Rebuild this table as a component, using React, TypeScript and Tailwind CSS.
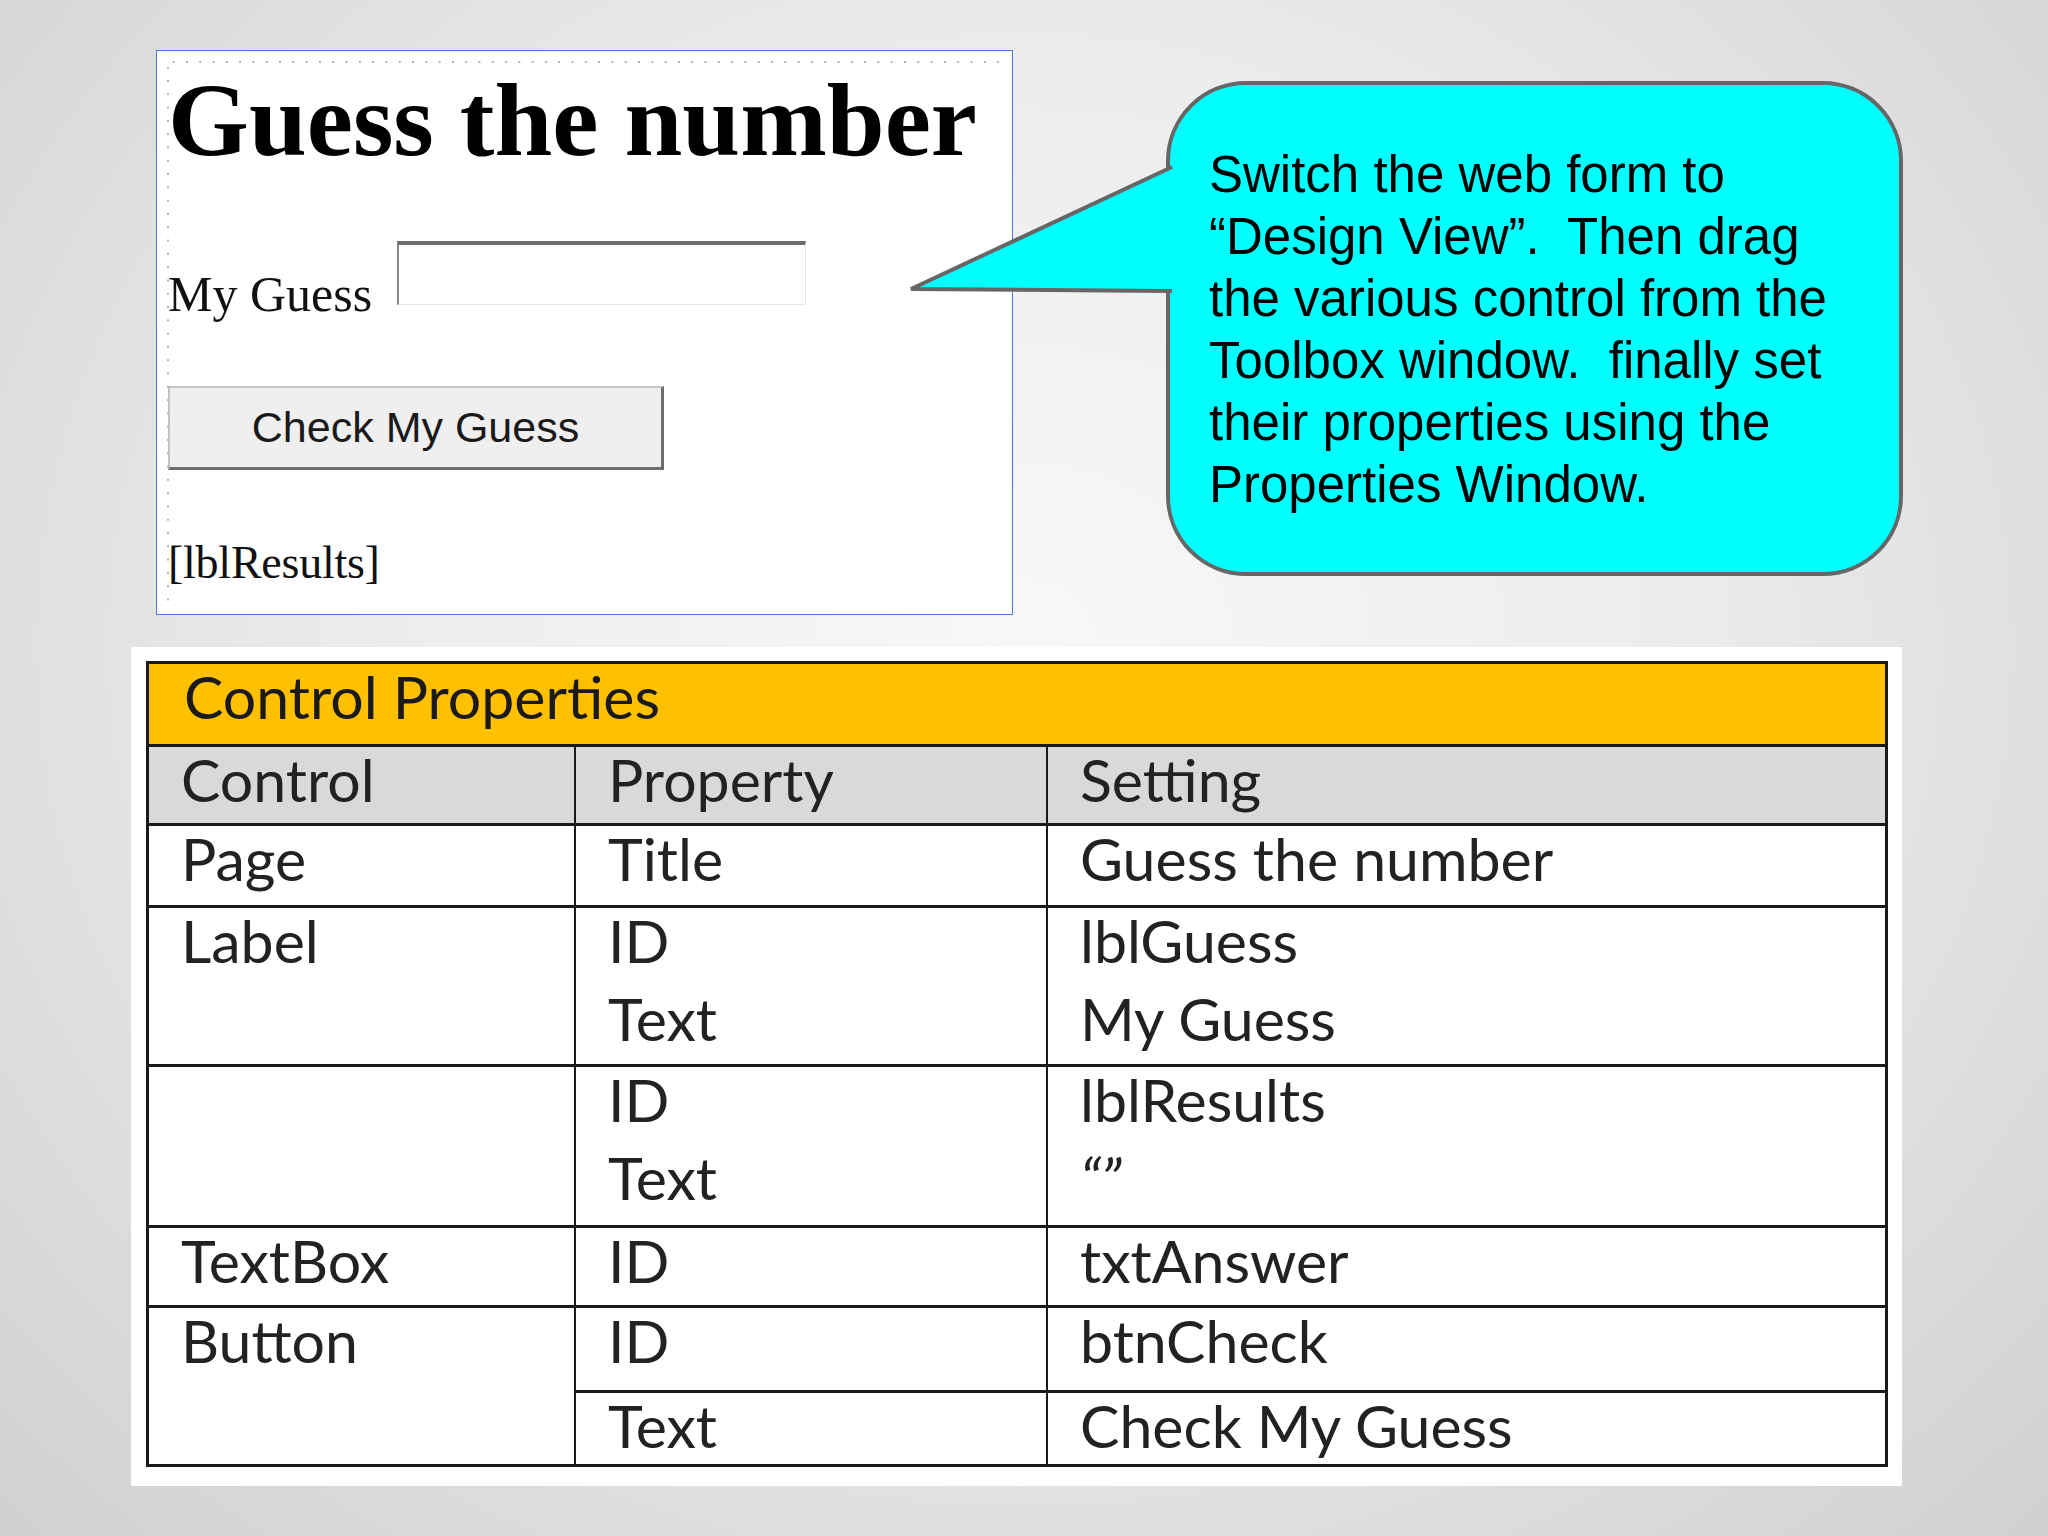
import React from 'react';

// one text line inside a table cell
function Line({ children, className = '' }: { children: React.ReactNode; className?: string }) {
  return <div className={`leading-[66px] whitespace-nowrap ${className}`}>{children}</div>;
}

function Cell({ w, children, last = false }: { w?: string; children?: React.ReactNode; last?: boolean }) {
  return (
    <div className={`${last ? 'flex-1' : `${w} border-r-2 border-[#1a1a1a]`} flex flex-col gap-[12px] pl-[32px]`}>
      {children}
    </div>
  );
}

function DesignForm() {
  return (
    <div className="relative w-[857px] h-[565px] border-[1.5px] border-[#4a7bd8] bg-white">
      {/* dotted guides of the designer surface */}
      <div className="absolute left-[10px] top-[10px] h-[2px] w-[838px] bg-[radial-gradient(circle,#b0b0b0_1px,transparent_1.4px)] bg-[length:13.3px_2px]" />
      <div className="absolute left-[10px] top-[10px] w-[2px] h-[550px] bg-[radial-gradient(circle,#b0b0b0_1px,transparent_1.4px)] bg-[length:2px_13.3px]" />

      <div className="pl-[11px] pt-[17px] font-['Liberation_Serif',serif] text-black">
        <h1 className="text-[104px] leading-none font-bold whitespace-nowrap">Guess the number</h1>

        <div className="mt-[69px] flex items-start">
          <div className="w-[229px] mt-[28px] text-[50px] leading-none text-[#111]">My Guess</div>
          <div className="w-[409px] h-[64px] border-t-[4px] border-l-2 border-r border-b border-t-[#6d6d6d] border-l-[#8a8a8a] border-r-[#e6e6e6] border-b-[#e6e6e6] bg-white" />
        </div>

        <div className="mt-[67px] w-[496px] h-[84px] flex items-center justify-center border-t-2 border-l-2 border-r-[3px] border-b-[3px] border-t-[#c4c4c4] border-l-[#c4c4c4] border-r-[#6e6e6e] border-b-[#6e6e6e] bg-[#efefef] font-['Liberation_Sans',sans-serif] text-[43px] text-[#1a1a1a]">
          Check My Guess
        </div>

        <div className="mt-[70px] text-[46px] leading-none text-[#111] tracking-[-0.25px]">[lblResults]</div>
      </div>
    </div>
  );
}

function Callout() {
  const lines = [
    'Switch the web form to',
    '\u201cDesign View\u201d.  Then drag',
    'the various control from the',
    'Toolbox window.  finally set',
    'their properties using the',
    'Properties Window.',
  ];
  return (
    <div className="relative ml-[153px] mt-[31px] w-[737px] h-[495px] rounded-[80px] border-[4px] border-[#666] bg-[#00ffff] pl-[39px] pt-[59px]">
      <div className="font-['Liberation_Sans',sans-serif] text-[51px] leading-[62px] text-black">
        {lines.map((l) => (
          <div key={l} className="whitespace-pre">{l}</div>
        ))}
      </div>
      <svg className="absolute left-[-262px] top-[80px]" width="270" height="130" viewBox="0 0 270 130">
        <polygon points="3,124 263,3 270,3 270,126 263,126" fill="#00ffff" />
        <polyline points="264,2 3,124 264,126" fill="none" stroke="#666" strokeWidth="4" strokeLinejoin="miter" />
      </svg>
    </div>
  );
}

function PropertiesTable() {
  const row = 'flex border-t-[3px] border-[#1a1a1a]';
  return (
    <div className="ml-[131px] mt-[32px] w-[1771px] h-[839px] bg-white pl-[15px] pt-[14px]">
      <div className="w-[1742px] border-[3px] border-[#1a1a1a] bg-white font-['Lato',sans-serif] text-[59px] text-[#222]">
        <div className="h-[80px] bg-[#ffc000] pl-[35px] text-[#1a1a1a]">
          <Line>Control Properties</Line>
        </div>
        <div className={`${row} h-[79px] bg-[#d9d9d9]`}>
          <Cell w="w-[427px]"><Line>Control</Line></Cell>
          <Cell w="w-[472px]"><Line>Property</Line></Cell>
          <Cell last><Line>Setting</Line></Cell>
        </div>
        <div className={`${row} h-[82px]`}>
          <Cell w="w-[427px]"><Line>Page</Line></Cell>
          <Cell w="w-[472px]"><Line>Title</Line></Cell>
          <Cell last><Line>Guess the number</Line></Cell>
        </div>
        <div className={`${row} h-[159px]`}>
          <Cell w="w-[427px]"><Line>Label</Line></Cell>
          <Cell w="w-[472px]"><Line>ID</Line><Line>Text</Line></Cell>
          <Cell last><Line>lblGuess</Line><Line>My Guess</Line></Cell>
        </div>
        <div className={`${row} h-[161px]`}>
          <Cell w="w-[427px]" />
          <Cell w="w-[472px]"><Line>ID</Line><Line>Text</Line></Cell>
          <Cell last>
            <Line>lblResults</Line>
            <div className="mt-[9px] italic text-[60px] leading-[50px]">{'\u201c\u201d'}</div>
          </Cell>
        </div>
        <div className={`${row} h-[80px]`}>
          <Cell w="w-[427px]"><Line>TextBox</Line></Cell>
          <Cell w="w-[472px]"><Line>ID</Line></Cell>
          <Cell last><Line>txtAnswer</Line></Cell>
        </div>
        <div className={`${row} h-[159px]`}>
          <Cell w="w-[427px]"><Line>Button</Line></Cell>
          <div className="flex-1 flex flex-col">
            <div className="flex h-[82px]">
              <Cell w="w-[472px]"><Line>ID</Line></Cell>
              <Cell last><Line>btnCheck</Line></Cell>
            </div>
            <div className="flex flex-1 border-t-[3px] border-[#1a1a1a]">
              <Cell w="w-[472px]"><Line>Text</Line></Cell>
              <Cell last><Line>Check My Guess</Line></Cell>
            </div>
          </div>
        </div>
      </div>
    </div>
  );
}

export default function App() {
  return (
    <div className="w-[2048px] h-[1536px] overflow-hidden bg-[radial-gradient(ellipse_at_50%_42%,#f8f8f8_0%,#ececec_45%,#d0d0d0_100%)]">
      <div className="flex items-start pl-[156px] pt-[50px]">
        <DesignForm />
        <Callout />
      </div>
      <PropertiesTable />
    </div>
  );
}
